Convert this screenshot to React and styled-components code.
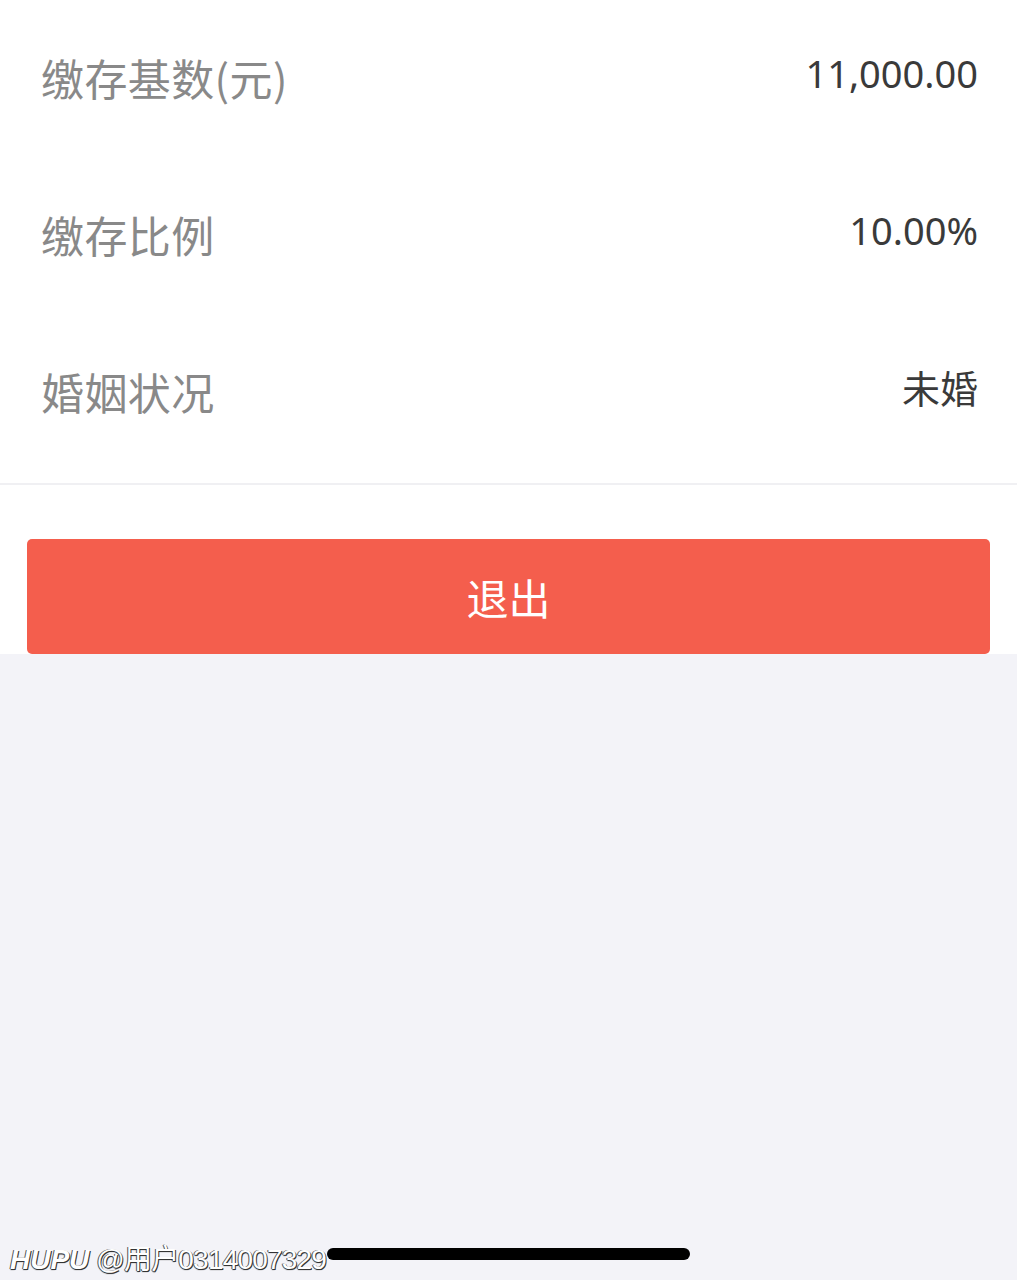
import React from "react";
import styled, { createGlobalStyle } from "styled-components";

const GlobalStyle = createGlobalStyle`
  html, body {
    margin: 0;
    padding: 0;
    background: #f3f3f8;
  }
  body {
    font-family: "Noto Sans", "Noto Sans CJK SC", sans-serif;
  }
`;

const rows = [
  { label: "缴存基数(元)", value: "11,000.00", lift: 6 },
  { label: "缴存比例", value: "10.00%", lift: 6 },
  { label: "婚姻状况", value: "未婚", lift: 5 },
];

const App = () => {
  return (
    <Page>
      <GlobalStyle />
      <Card>
        <List>
          {rows.map((r) => (
            <Row key={r.label}>
              <Label>{r.label}</Label>
              <Value $lift={r.lift}>{r.value}</Value>
            </Row>
          ))}
        </List>
        <ButtonWrap>
          <LogoutBtn>退出</LogoutBtn>
        </ButtonWrap>
      </Card>
      <Footer>
        <HomeBar />
        <Watermark>
          <Brand>HUPU</Brand> @用户0314007329
        </Watermark>
      </Footer>
    </Page>
  );
};

const Page = styled.div`
  min-height: 1280px;
  display: flex;
  flex-direction: column;
  background: #f3f3f8;
`;

const Card = styled.div`
  background: #ffffff;
`;

const List = styled.div`
  padding-bottom: 12px;
  border-bottom: 2px solid #f0f0f3;
`;

const Row = styled.div`
  height: 157px;
  display: flex;
  align-items: center;
  justify-content: space-between;
  padding: 0 39px 0 41px;
`;

const Label = styled.span`
  font-family: "Noto Sans CJK SC", sans-serif;
  font-size: 43px;
  color: #898989;
  line-height: 1;
  position: relative;
  top: -1px;
  letter-spacing: 0.4px;
`;

const Value = styled.span`
  font-family: "Noto Sans", "Noto Sans CJK SC", sans-serif;
  font-size: 38px;
  color: #3a3a3a;
  line-height: 1;
  position: relative;
  top: ${(p) => -p.$lift}px;
`;

const ButtonWrap = styled.div`
  padding: 54px 27px 0 27px;
`;

const LogoutBtn = styled.button`
  display: flex;
  align-items: center;
  justify-content: center;
  width: 100%;
  height: 115px;
  border: none;
  border-radius: 5px;
  background: #f45e4d;
  color: #ffffff;
  font-family: "Noto Sans CJK SC", sans-serif;
  font-size: 42px;
  padding: 0;
`;

const Footer = styled.div`
  margin-top: auto;
  position: relative;
  height: 60px;
  display: flex;
  justify-content: center;
`;

const HomeBar = styled.div`
  margin-top: 28px;
  width: 363px;
  height: 12px;
  border-radius: 6px;
  background: #000000;
`;

const Watermark = styled.div`
  position: absolute;
  left: 10px;
  top: 17px;
  font-family: "Liberation Sans", "Noto Sans CJK SC", sans-serif;
  font-size: 28px;
  letter-spacing: -0.8px;
  color: #ffffff;
  text-shadow: 1px 1px 0 #333, -1px 0 0 #555, 0 1px 1px #222;
  white-space: nowrap;
`;

const Brand = styled.span`
  font-style: italic;
  font-weight: bold;
  letter-spacing: 0;
`;

export default App;
